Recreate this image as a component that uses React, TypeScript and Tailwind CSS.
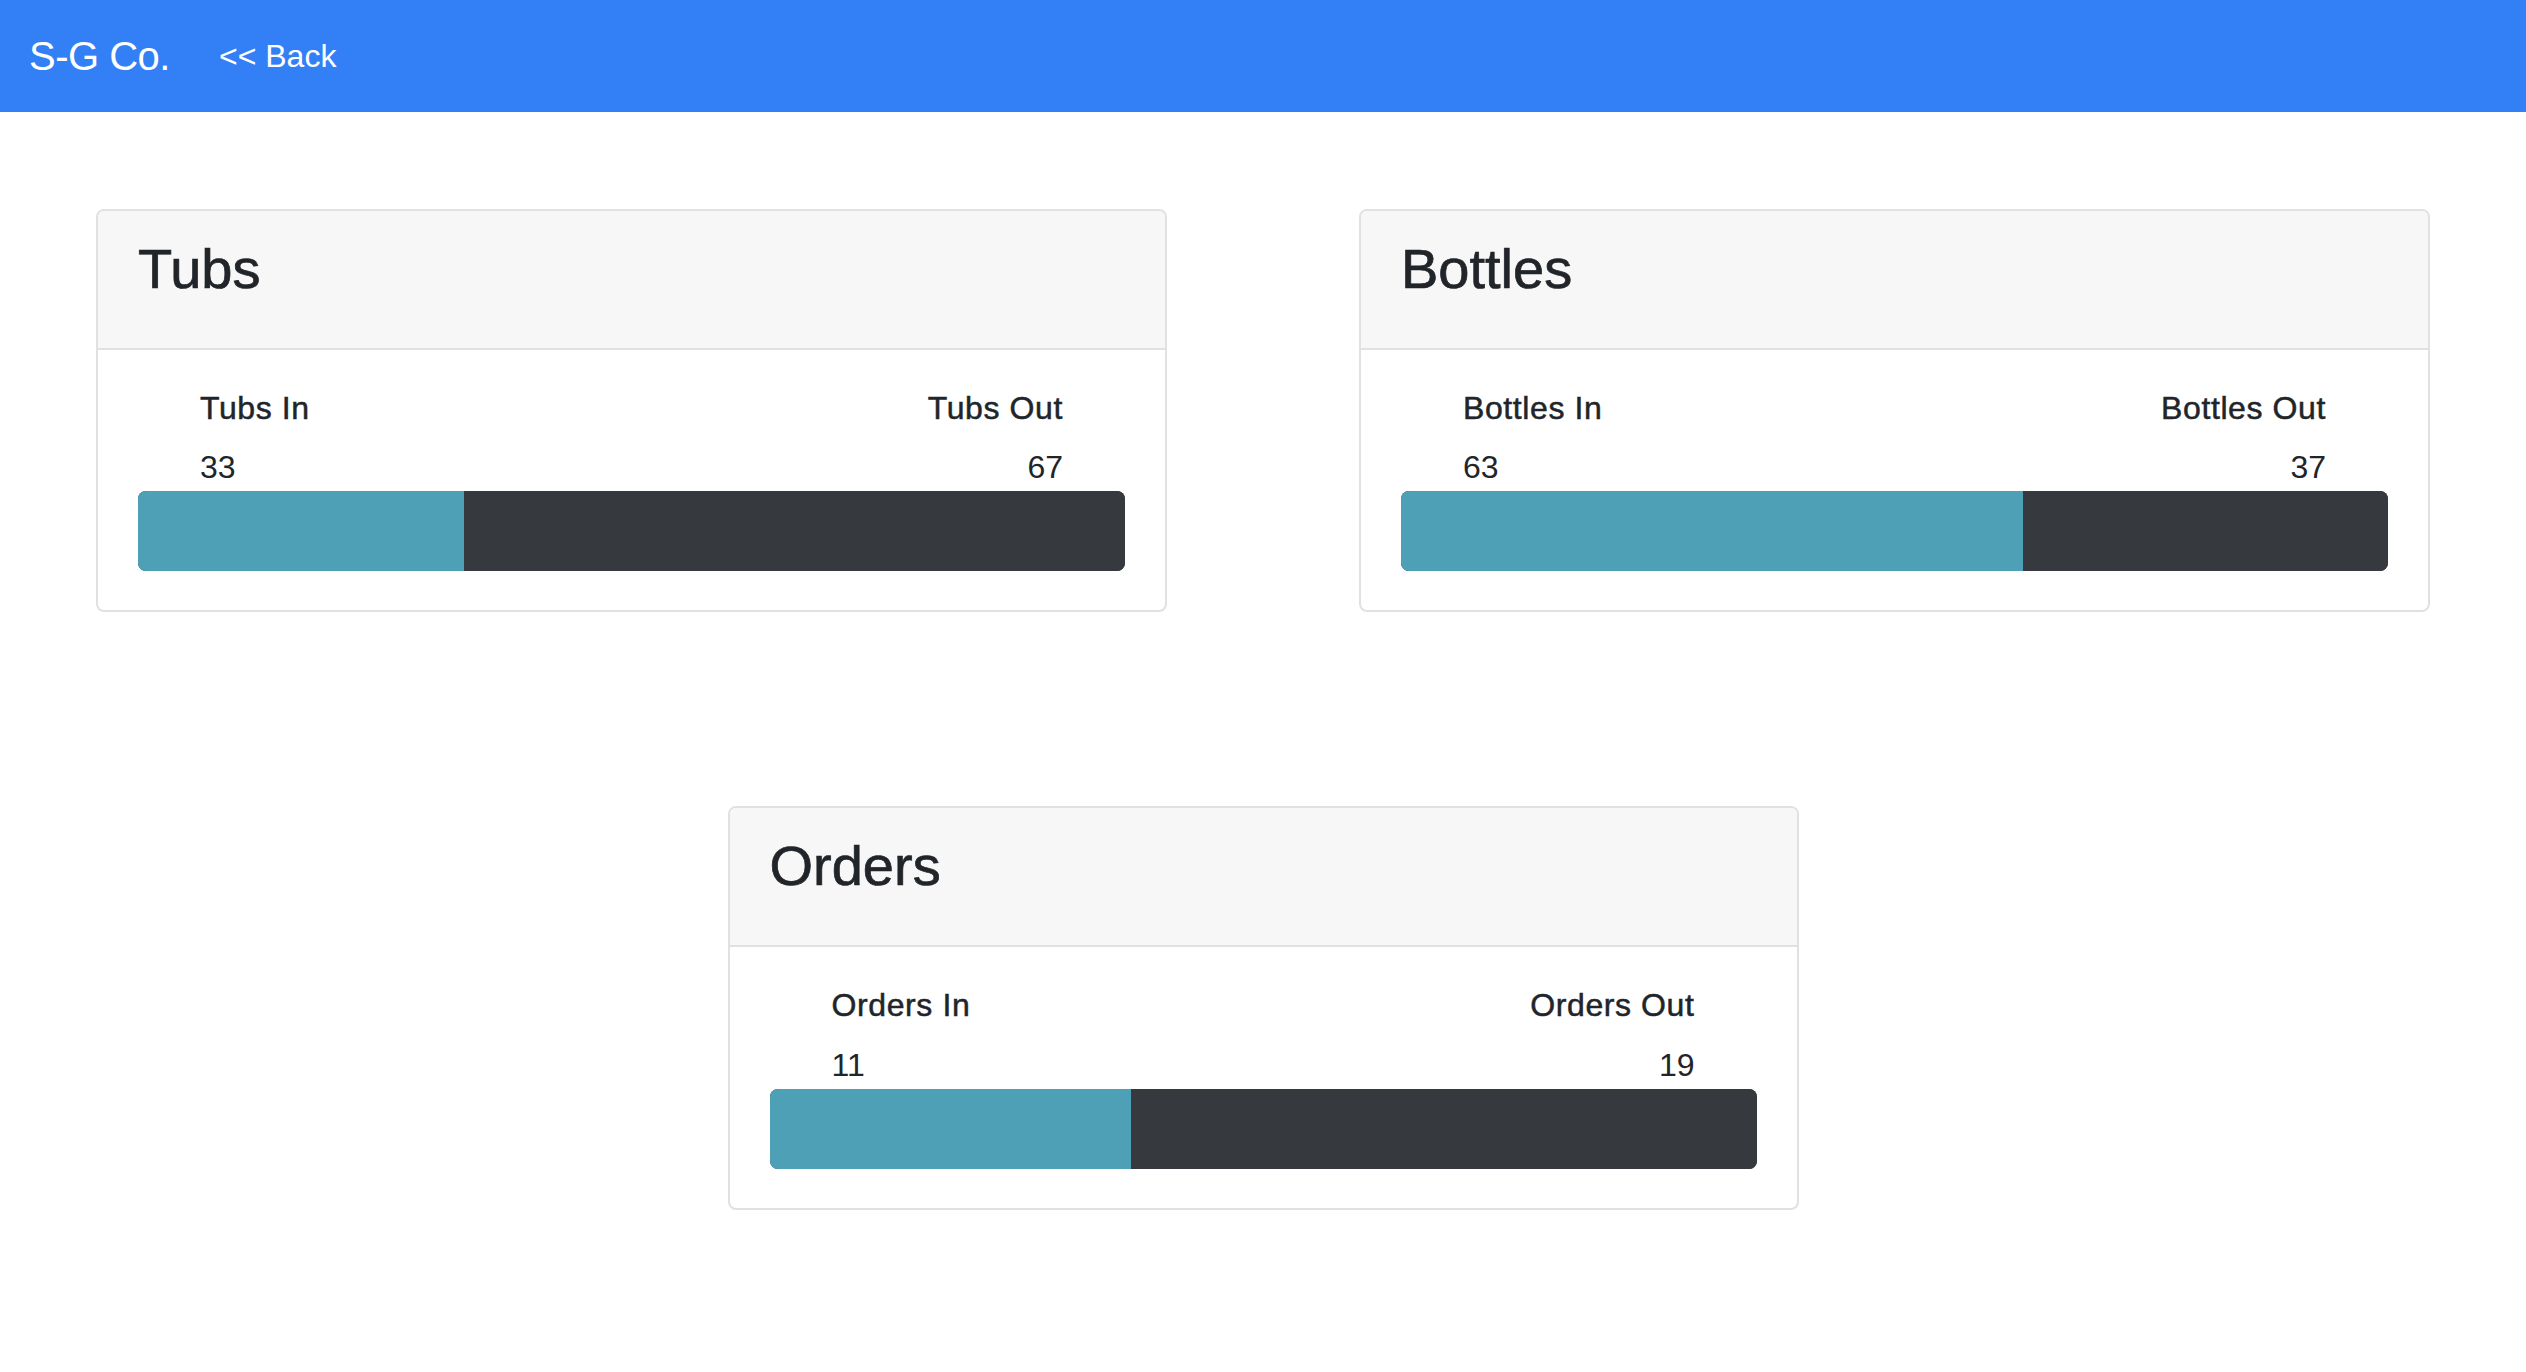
import React from "react";

type CardProps = {
  title: string;
  inLabel: string;
  outLabel: string;
  inVal: number;
  outVal: number;
};

function StatCard({ title, inLabel, outLabel, inVal, outVal }: CardProps) {
  const total = inVal + outVal;
  const pct = total > 0 ? (inVal / total) * 100 : 0;
  return (
    <div className="w-[1071px] border-2 border-[#e1e1e1] rounded-[8px] overflow-hidden bg-white">
      <div className="h-[139px] box-border bg-[#f7f7f7] border-b-2 border-[#e1e1e1] px-[40px] pt-[24px]">
        <h3 className="text-[56px] leading-[1.2] font-medium [-webkit-text-stroke:0.7px_#212529]">{title}</h3>
      </div>
      <div className="px-[40px] pt-[39px] pb-[39px]">
        <div className="flex justify-between px-[62px]">
          <div className="flex flex-col">
            <h5 className="text-[32px] leading-[1.2] font-medium mb-[16px] tracking-[0.6px] [-webkit-text-stroke:0.5px_#212529]">
              {inLabel}
            </h5>
            <span className="text-[32px] leading-[48px]">{inVal}</span>
          </div>
          <div className="flex flex-col items-end">
            <h5 className="text-[32px] leading-[1.2] font-medium mb-[16px] tracking-[0.6px] [-webkit-text-stroke:0.5px_#212529]">
              {outLabel}
            </h5>
            <span className="text-[32px] leading-[48px]">{outVal}</span>
          </div>
        </div>
        <div className="flex h-[80px] rounded-[8px] overflow-hidden bg-[#363a3e]">
          <div className="h-full bg-[#4ea0b7]" style={{ width: `${pct}%` }} />
          <div className="h-full flex-1 bg-[#363a3e]" />
        </div>
      </div>
    </div>
  );
}

export default function App() {
  return (
    <div className="min-h-screen bg-white font-['Liberation_Sans',Arial,sans-serif] text-[#212529]">
      <nav className="h-[112px] bg-[#3380f6] flex items-center px-[29px]">
        <span className="text-[40px] text-white mr-[33px] leading-[1.5] tracking-[-0.5px]">S-G Co.</span>
        <a href="#" className="text-[32px] text-white px-[16px] leading-[1.5]">
          &lt;&lt; Back
        </a>
      </nav>
      <div className="grid grid-cols-2">
        <div className="flex justify-center py-[97px]">
          <StatCard title="Tubs" inLabel="Tubs In" outLabel="Tubs Out" inVal={33} outVal={67} />
        </div>
        <div className="flex justify-center py-[97px]">
          <StatCard title="Bottles" inLabel="Bottles In" outLabel="Bottles Out" inVal={63} outVal={37} />
        </div>
      </div>
      <div className="flex justify-center py-[97px]">
        <StatCard title="Orders" inLabel="Orders In" outLabel="Orders Out" inVal={11} outVal={19} />
      </div>
    </div>
  );
}
